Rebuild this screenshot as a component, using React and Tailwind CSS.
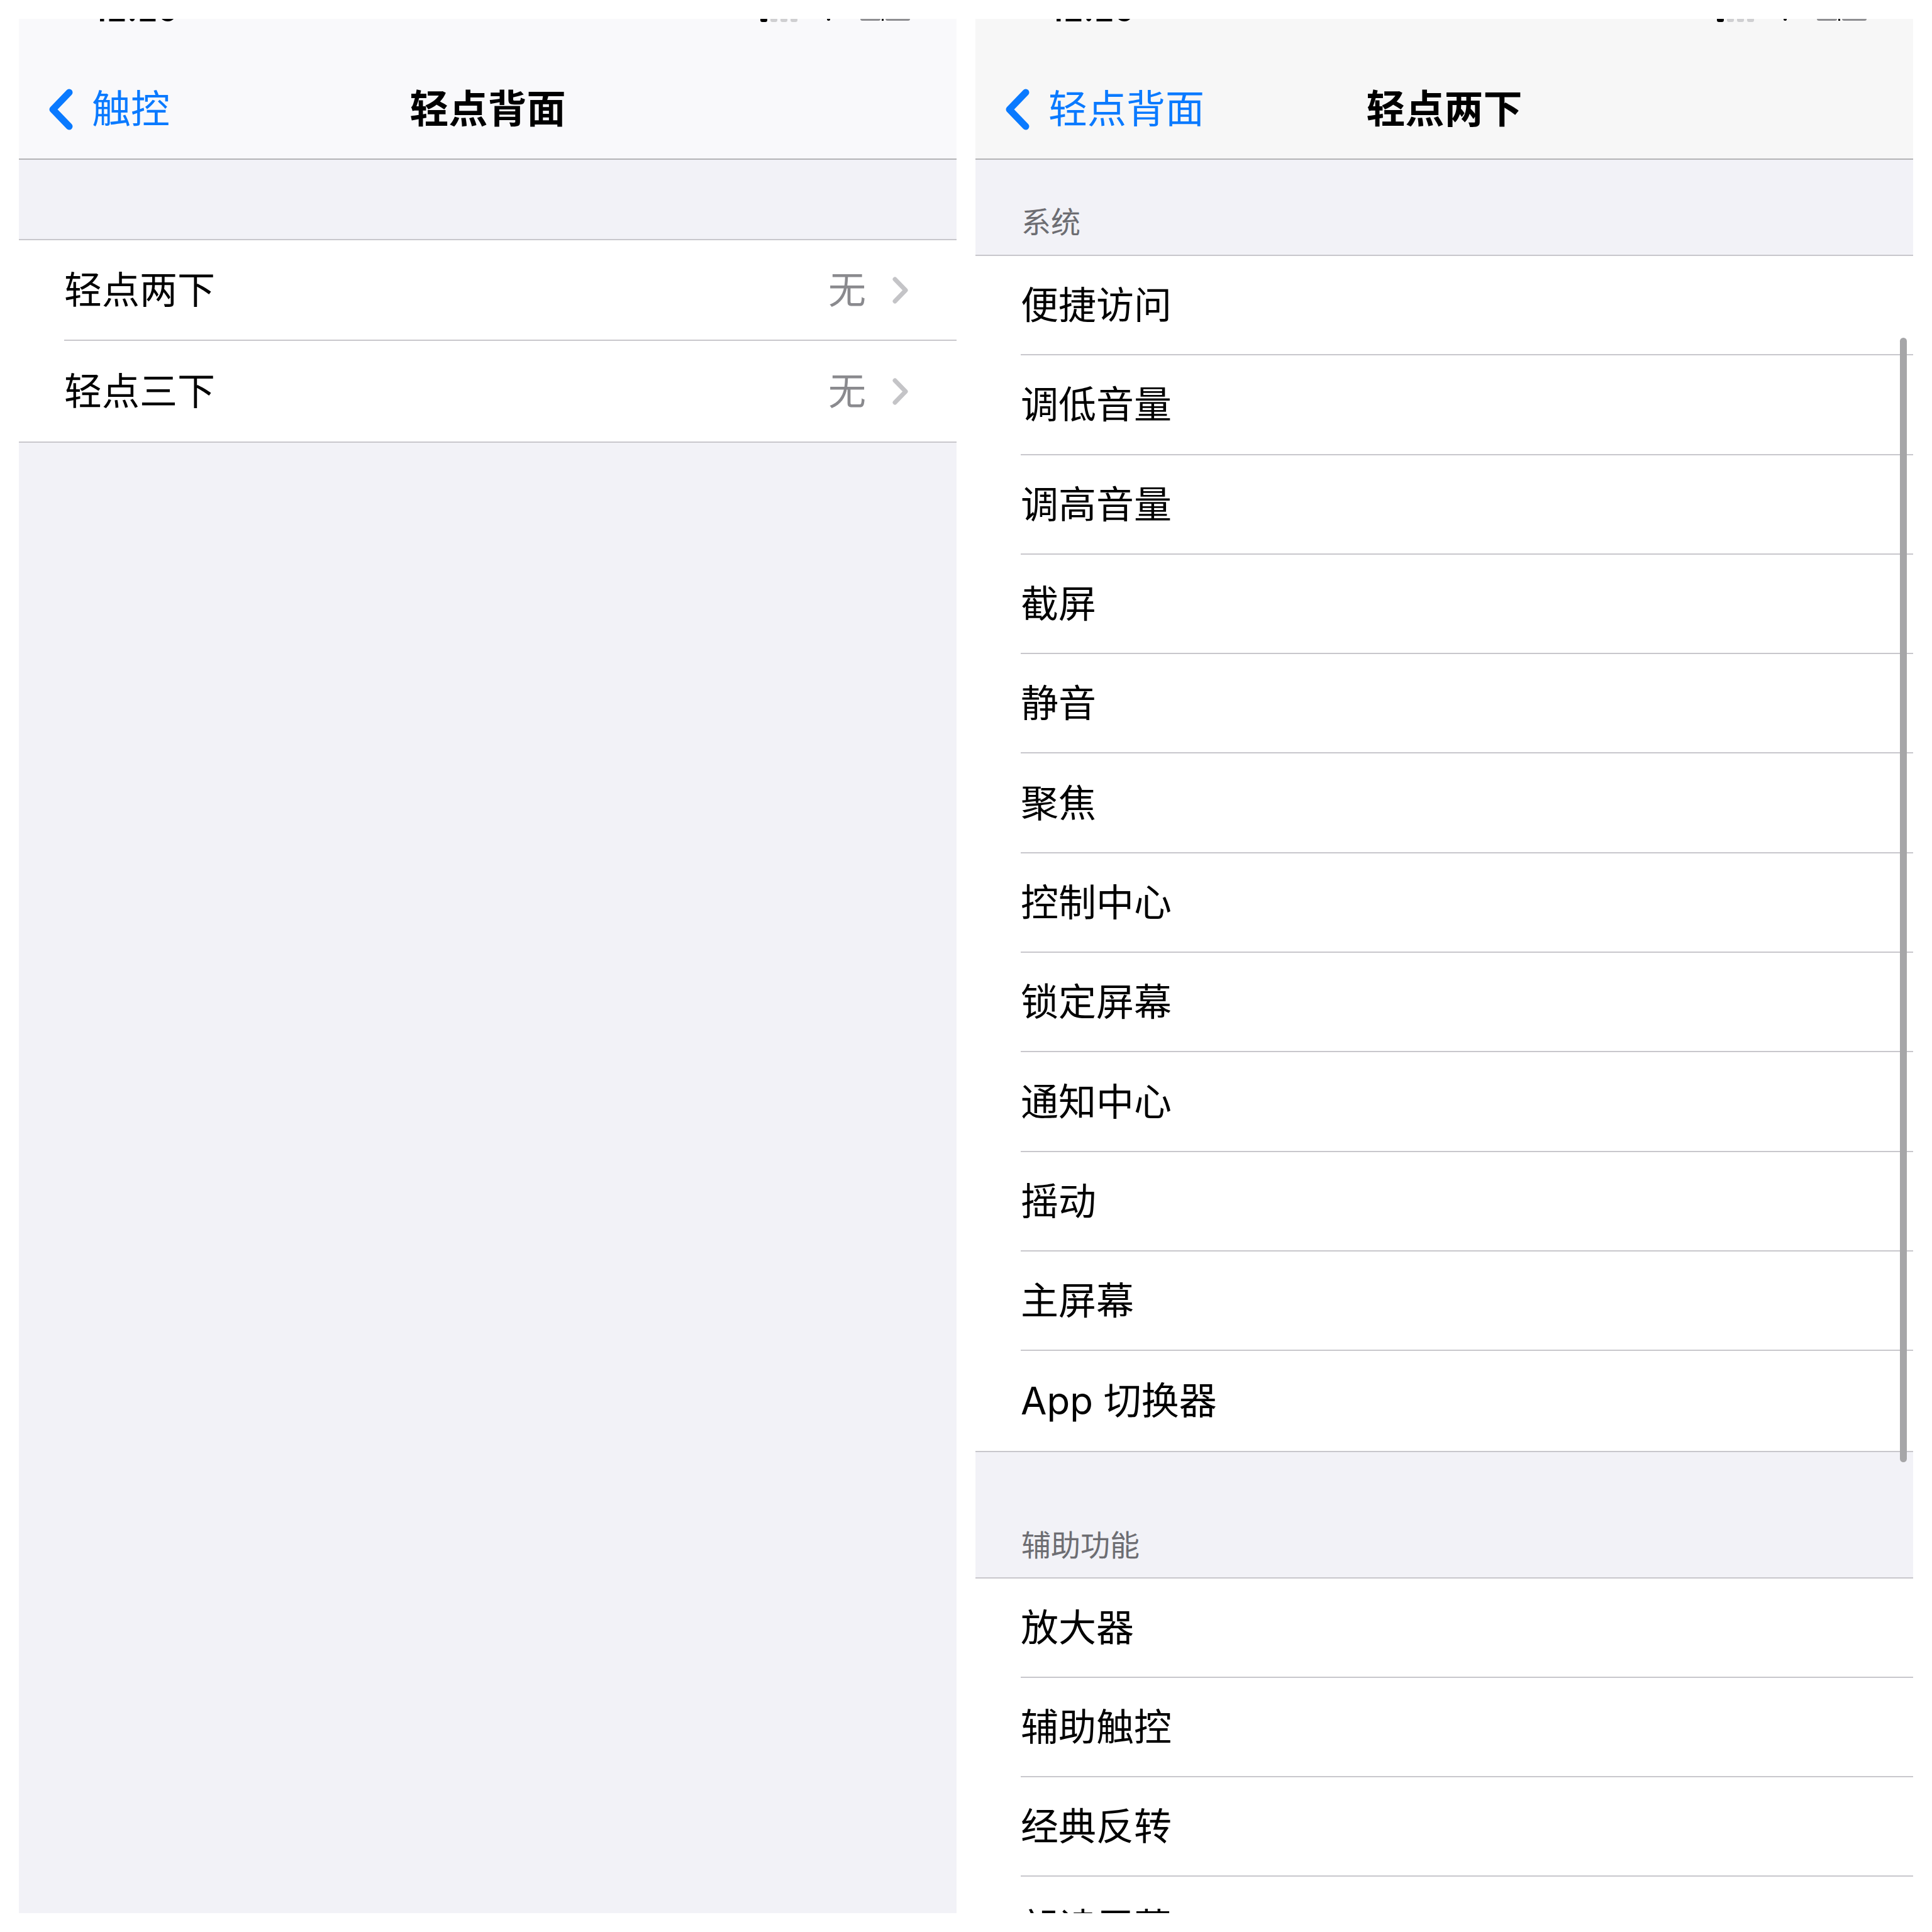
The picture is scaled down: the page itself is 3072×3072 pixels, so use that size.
import React from "react";

const FONT = "font-['Inter','Noto_Sans_CJK_SC',sans-serif]";

function BackChevron() {
  return (
    <svg width="39" height="66" viewBox="0 0 39 66" fill="none">
      <polyline points="33,6 7,33 33,60" stroke="#0a7aff" strokeWidth="11" strokeLinecap="round" strokeLinejoin="round" />
    </svg>
  );
}

function Disclosure() {
  return (
    <svg width="26" height="43" viewBox="0 0 26 43" fill="none">
      <polyline points="4,4 21,21.5 4,39" stroke="#c4c4c7" strokeWidth="7" strokeLinecap="round" strokeLinejoin="round" />
    </svg>
  );
}

function StatusFragments() {
  return (
    <>
      <div className="absolute left-[118px] top-0 h-[4px] w-[170px] overflow-hidden">
        <div className="absolute bottom-[-7px] left-0 text-[50px] leading-none font-semibold text-black font-['Inter',sans-serif] tracking-[1px]">
          12:29
        </div>
      </div>
      <div className="absolute left-[1179px] top-0 flex gap-[5px]">
        <div className="h-[5px] w-[11px] rounded-b-[3px] bg-black" />
        <div className="h-[5px] w-[11px] rounded-b-[3px] bg-[#cfcfd1]" />
        <div className="h-[5px] w-[11px] rounded-b-[3px] bg-[#cfcfd1]" />
        <div className="h-[5px] w-[11px] rounded-b-[3px] bg-[#cfcfd1]" />
      </div>
      <div className="absolute left-[1285px] top-0 h-[3px] w-[5px] rounded-b-full bg-black" />
      <div className="absolute left-[1338px] top-0 flex items-start">
        <div className="h-[3px] w-[32px] rounded-b-[3px] bg-[#8e8e91]" />
        <div className="ml-[2px] h-[3px] w-[3px] bg-black" />
        <div className="ml-[3px] h-[3px] w-[39px] rounded-b-[3px] bg-[#8e8e91]" />
      </div>
    </>
  );
}

function NavBar({ back, title, bg }) {
  return (
    <div className={`h-[224px] shrink-0 border-b-2 border-[#b3b3b6] ${bg}`}>
      <div className="h-[100px]" />
      <div className="grid h-[88px] grid-cols-[1fr_auto_1fr] items-center">
        <div className="flex items-center pl-[47px]">
          <BackChevron />
          <span className="ml-[30px] text-[62px] leading-none text-[#0a7aff]">{back}</span>
        </div>
        <div className="text-[62px] leading-none font-semibold text-black">{title}</div>
        <div />
      </div>
    </div>
  );
}

function LeftPanel() {
  const rows = ["轻点两下", "轻点三下"];
  return (
    <div className={`relative flex h-[3012px] w-[1491px] shrink-0 flex-col overflow-hidden bg-[#f2f2f7] ${FONT}`}>
      <NavBar back="触控" title="轻点背面" bg="bg-[#f9f9fb]" />
      <div className="h-[126px] shrink-0" />
      <div className="border-y-2 border-[#c8c7cc] bg-white">
        {rows.map((r, i) => (
          <div key={r} className="pl-[72px]">
            <div
              className={`flex items-center pr-[76px] ${i < rows.length - 1 ? "h-[160px] border-b-2 border-[#c8c7cc]" : "h-[160px]"}`}
            >
              <span className="flex-1 text-[60px] leading-none text-black">{r}</span>
              <span className="text-[60px] leading-none text-[#8a8a8e]">无</span>
              <span className="ml-[42px] flex items-center">
                <Disclosure />
              </span>
            </div>
          </div>
        ))}
      </div>
      <StatusFragments />
    </div>
  );
}

function Group({ items, cut }) {
  return (
    <div className={`bg-white ${cut ? "border-t-2" : "border-y-2"} border-[#c8c7cc]`}>
      {items.map((r, i) => (
        <div key={r} className="pl-[72px]">
          <div
            className={`flex h-[158.3px] items-center ${i < items.length - 1 ? "border-b-2 border-[#c8c7cc]" : ""}`}
          >
            <span className="text-[60px] leading-none text-black">{r}</span>
          </div>
        </div>
      ))}
    </div>
  );
}

function RightPanel() {
  const sys = [
    "便捷访问",
    "调低音量",
    "调高音量",
    "截屏",
    "静音",
    "聚焦",
    "控制中心",
    "锁定屏幕",
    "通知中心",
    "摇动",
    "主屏幕",
    "App 切换器",
  ];
  const acc = ["放大器", "辅助触控", "经典反转", "朗读屏幕"];
  return (
    <div className={`relative flex h-[3012px] w-[1491px] shrink-0 flex-col overflow-hidden bg-[#f2f2f7] ${FONT}`}>
      <NavBar back="轻点背面" title="轻点两下" bg="bg-[#f7f7f7]" />
      <div className="flex h-[151px] shrink-0 items-end pb-[22px] pl-[73px]">
        <span className="text-[47px] leading-[60px] text-[#6d6d72]">系统</span>
      </div>
      <Group items={sys} />
      <div className="flex h-[199px] shrink-0 items-end pb-[21px] pl-[73px]">
        <span className="text-[47px] leading-[60px] text-[#6d6d72]">辅助功能</span>
      </div>
      <Group items={acc} cut />
      <div className="absolute right-[10px] top-[507px] h-[1788px] w-[11px] rounded-full bg-[#a6a6a8]" />
      <StatusFragments />
    </div>
  );
}

export default function App() {
  return (
    <div className="flex h-[3072px] w-[3072px] gap-[30px] bg-white p-[30px]">
      <LeftPanel />
      <RightPanel />
    </div>
  );
}
